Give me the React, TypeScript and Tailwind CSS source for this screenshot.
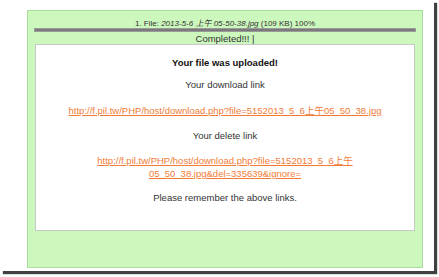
const link1 = 'http://f.pil.tw/PHP/host/download.php?file=5152013_5_6上午05_50_38.jpg';

export default function App() {
  return (
    <div
      className="w-[439px] h-[277px] bg-white overflow-hidden"
      style={{ fontFamily: '"Liberation Sans", Arial, "Noto Sans CJK TC", sans-serif' }}
    >
      {/* screenshot frame with drop shadow */}
      <div className="w-[434px] h-[271px] bg-white pl-[27px] pt-[10px] shadow-[3px_3px_1px_rgba(30,30,30,0.85)]">
        <div className="w-[396px] h-[258px] bg-[#ccf7bd] border border-[#a9dc9e] flex flex-col items-center">
          <div className="mt-[8px] h-[9px] text-[8px] leading-[9px] text-[#333] whitespace-nowrap">
            1. File: <i>2013-5-6 上午 05-50-38.jpg</i> (109 KB) 100%
          </div>
          <div className="w-[382px] h-[4px] bg-[#7a7a7a] border border-[#9a9a9a]" />
          <div className="h-[11px] mt-[1px] text-[9.5px] leading-[11px] text-[#333]">Completed!!! |</div>
          <div className="w-[380px] h-[187px] bg-white border border-[#c8c8c8] flex flex-col items-center text-center text-[9.5px] text-[#333]">
            <div className="mt-[12px] font-bold text-[#111] leading-[12px]">Your file was uploaded!</div>
            <div className="mt-[10px] leading-[12px]">Your download link</div>
            <a href="#" className="mt-[14px] leading-[12px] text-[#f27b35] underline whitespace-nowrap">
              {link1}
            </a>
            <div className="mt-[13px] leading-[12px]">Your delete link</div>
            <a href="#" className="mt-[12px] leading-[13px] text-[#f27b35] underline whitespace-nowrap">
              http://f.pil.tw/PHP/host/download.php?file=5152013_5_6上午
              <br />
              05_50_38.jpg&amp;del=335639&amp;ignore=
            </a>
            <div className="mt-[12px] leading-[12px]">Please remember the above links.</div>
          </div>
        </div>
      </div>
    </div>
  );
}
